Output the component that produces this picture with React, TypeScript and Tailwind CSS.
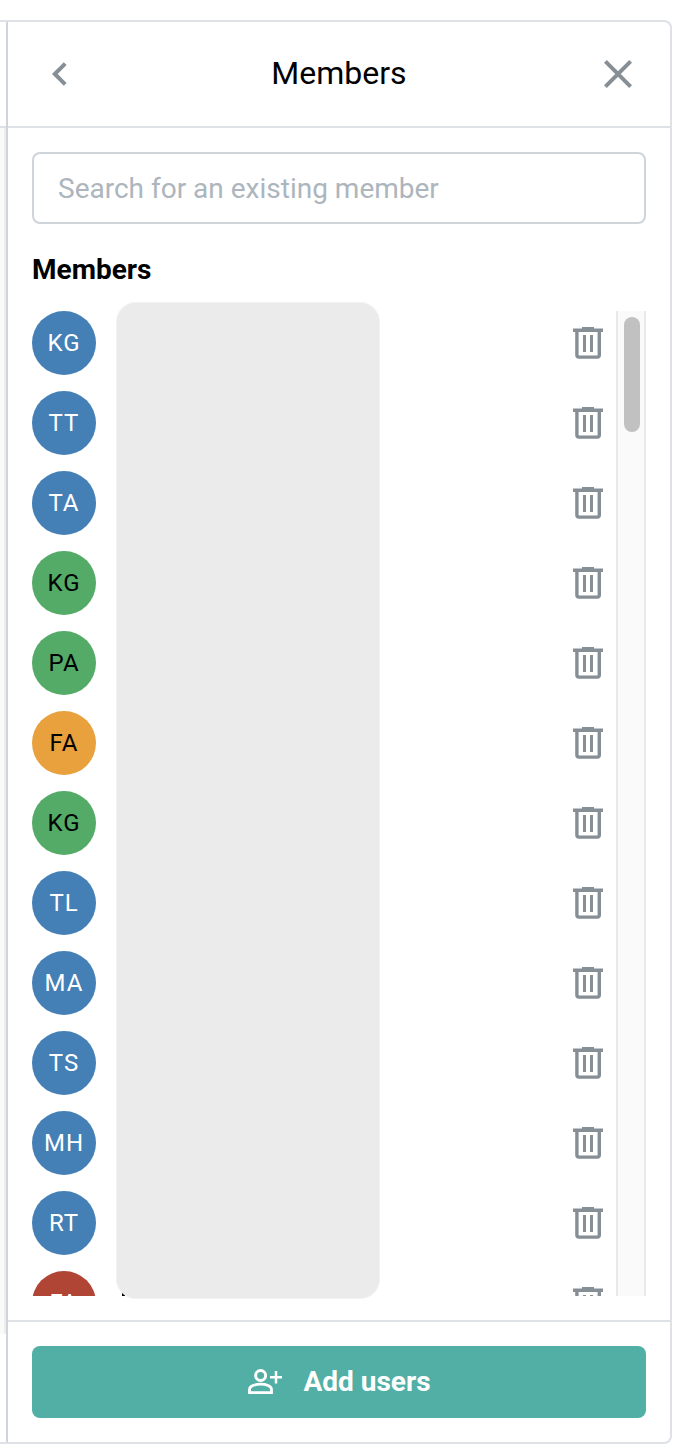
type Tone = 'blue' | 'green' | 'orange' | 'red';

interface Member {
  initials: string;
  tone: Tone;
}

const tones: Record<Tone, string> = {
  blue: 'bg-[#447fb5] text-white',
  green: 'bg-[#54aa67] text-black',
  orange: 'bg-[#e8a13c] text-black',
  red: 'bg-[#b04435] text-white',
};

const members: Member[] = [
  { initials: 'KG', tone: 'blue' },
  { initials: 'TT', tone: 'blue' },
  { initials: 'TA', tone: 'blue' },
  { initials: 'KG', tone: 'green' },
  { initials: 'PA', tone: 'green' },
  { initials: 'FA', tone: 'orange' },
  { initials: 'KG', tone: 'green' },
  { initials: 'TL', tone: 'blue' },
  { initials: 'MA', tone: 'blue' },
  { initials: 'TS', tone: 'blue' },
  { initials: 'MH', tone: 'blue' },
  { initials: 'RT', tone: 'blue' },
  { initials: 'FA', tone: 'red' },
];

function BackIcon() {
  return (
    <svg width="20" height="28" viewBox="0 0 20 28" fill="none" stroke="#868e96" strokeWidth="4">
      <path d="M15.2 3.6 L4.8 14 L15.2 24.4" />
    </svg>
  );
}

function CloseIcon() {
  return (
    <svg width="32" height="32" viewBox="0 0 32 32" fill="none" stroke="#868e96" strokeWidth="4">
      <path d="M3.4 3.4 L28.6 28.6 M28.6 3.4 L3.4 28.6" />
    </svg>
  );
}

function TrashIcon() {
  return (
    <svg width="30" height="34" viewBox="0 0 30 34" fill="none">
      <path d="M9 1h12v1.5h9V6H0V2.5h9z" fill="#868e96" />
      <path d="M3.9 5v24.1c0 1.1.9 2 2 2h18.4c1.1 0 2-.9 2-2V5" stroke="#868e96" strokeWidth="3.4" />
      <path d="M11.5 9v17M18.5 9v17" stroke="#868e96" strokeWidth="3" />
    </svg>
  );
}

function AddUserIcon() {
  return (
    <svg width="36" height="28" viewBox="-1 0 36 28" fill="none" stroke="white">
      <circle cx="12.6" cy="7.5" r="5" strokeWidth="3" />
      <path d="M1.5 24.6v-3.2c0-3.3 5.4-5.2 11-5.2s11 1.9 11 5.2v3.2z" strokeWidth="2.8" />
      <path d="M28 3v12.4M22 9.2h12" strokeWidth="2.5" />
    </svg>
  );
}

function MemberRow({ initials, tone }: Member) {
  return (
    <li className="flex h-16 shrink-0 items-center justify-between pr-[13px]">
      <span
        className={`flex size-16 items-center justify-center rounded-full text-[24px] leading-none tracking-[1px] ${tones[tone]}`}
      >
        {initials}
      </span>
      <button aria-label="Remove member" className="flex">
        <TrashIcon />
      </button>
    </li>
  );
}

export default function App() {
  return (
    <div className="h-[1446px] w-[680px] bg-white pt-5 font-['Roboto',sans-serif] text-black">
      <div className="flex h-[1424px] w-[672px] rounded-r-[8px] border-y-2 border-r-2 border-[#dee2e6]">
        <div className="flex w-1.5 shrink-0 flex-col">
          <div className="h-[106px] border-b-2 border-[#dee2e6]" />
          <div className="h-[1206px] border-r-2 border-[#ededed] bg-[#fafafa]" />
        </div>
        <section className="flex min-w-0 flex-1 flex-col border-l-2 border-[#ced4da]">
          <header className="flex h-[106px] shrink-0 items-center justify-between border-b-2 border-[#dee2e6] pr-[36px] pl-[42px]">
            <button aria-label="Back" className="flex">
              <BackIcon />
            </button>
            <h1 className="ml-1.5 pb-0.5 text-[32px] leading-none">Members</h1>
            <button aria-label="Close" className="flex">
              <CloseIcon />
            </button>
          </header>

          <div className="flex min-h-0 flex-1 flex-col px-6 pt-6 pb-6">
            <input
              className="h-[72px] shrink-0 rounded-[8px] border-2 border-[#ced4da] px-6 text-[28px] outline-none placeholder:text-[#adb5bd]"
              placeholder="Search for an existing member"
            />
            <h2 className="mt-[30px] text-[28px] leading-8 font-bold">Members</h2>
            <div className="relative mt-[25px] flex h-[985px] shrink-0">
              <ul className="flex min-w-0 flex-1 flex-col gap-4 overflow-hidden">
                {members.map((member, i) => (
                  <MemberRow key={i} {...member} />
                ))}
              </ul>
              <div className="w-[30px] border-x-2 border-[#e9e9e9] bg-[#fafafa] px-1.5 pt-1.5">
                <div className="h-[115px] w-4 rounded-full bg-[#c1c1c1]" />
              </div>
              <div className="absolute top-[981px] left-[90px] h-1 w-[3px] bg-black" />
              <div className="absolute -top-[9px] left-[84px] h-[997px] w-[264px] rounded-[20px] border border-[#f1f1f1] bg-[#ebebeb]" />
            </div>
          </div>

          <footer className="flex h-[122px] shrink-0 border-t-2 border-[#dee2e6] p-6">
            <button className="flex h-[72px] flex-1 items-center justify-center gap-5 rounded-[8px] bg-[#51afa6] text-[28px] font-bold text-white">
              <AddUserIcon />
              <span>Add users</span>
            </button>
          </footer>
        </section>
      </div>
    </div>
  );
}
